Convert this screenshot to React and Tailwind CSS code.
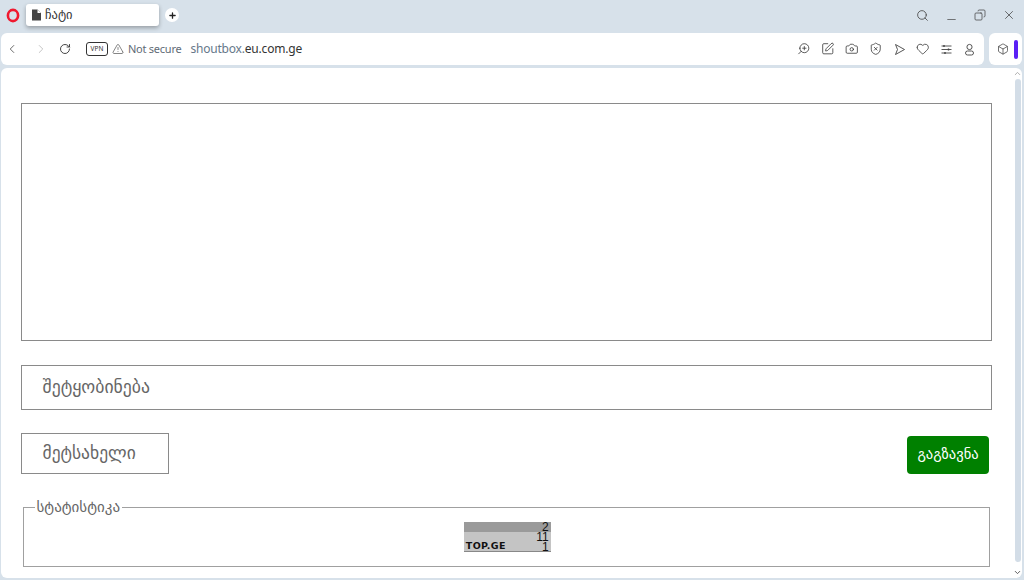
import React from "react";
import {
  ChevronLeft,
  ChevronRight,
  ChevronUp,
  ChevronDown,
  RotateCw,
  TriangleAlert,
  Search,
  Minus,
  X,
  Plus,
  ZoomIn,
  SquarePen,
  Camera,
  ShieldX,
  Heart,
  Box,
  Copy,
} from "lucide-react";

const OperaLogo = () => (
  <svg width="14" height="15" viewBox="0 0 14 15">
    <ellipse cx="7" cy="7.5" rx="5.1" ry="5.6" fill="none" stroke="#f0192f" strokeWidth="2.6" />
  </svg>
);

const PageIcon = () => (
  <svg width="11" height="12" viewBox="0 0 11 12">
    <path d="M1 0.5 H6.5 L10 4 V11.5 H1 Z" fill="#444" />
    <path d="M6.5 0.5 V4 H10" fill="#fff" />
  </svg>
);

const SendIcon = () => (
  <svg width="13" height="13" viewBox="0 0 13 13" fill="none" stroke="#444" strokeWidth="0.9" strokeLinejoin="round">
    <path d="M2.5 1.5 L11.5 6.5 L2.5 11.5 L4.5 6.5 Z" />
  </svg>
);

const SlidersIcon = () => (
  <svg width="13" height="13" viewBox="0 0 13 13" stroke="#444" strokeWidth="0.9">
    <path d="M1.5 3 H11.5 M1.5 6.5 H11.5 M1.5 10 H11.5" />
    <path d="M4 2 V4 M8.5 5.5 V7.5 M5 9 V11" strokeWidth="1.4" />
  </svg>
);

const UserIcon = () => (
  <svg width="13" height="13" viewBox="0 0 13 13" fill="none" stroke="#444" strokeWidth="0.9">
    <circle cx="6.5" cy="4" r="2.6" />
    <rect x="2.5" y="8" width="8" height="4" rx="2" />
  </svg>
);

const lucideProps = { size: 13.5, strokeWidth: 1.4 };

const georgian = "font-['DejaVu_Sans',sans-serif]";

export default function App() {
  return (
    <div className="w-[1024px] h-[580px] overflow-hidden bg-[#d7e1ea] flex flex-col font-['Noto_Sans',sans-serif]">
      {/* tab strip */}
      <div className="h-[33px] shrink-0 flex items-center pl-[6px] pr-[8px] pb-[3px]">
        <OperaLogo />
        <div className="ml-[6px] w-[133px] h-[22px] bg-white rounded-[3px] shadow-[0_2px_4px_rgba(0,0,0,0.3)] flex items-center pl-[5px] gap-[3px]">
          <PageIcon />
          <span className={`text-[12.5px] text-[#333] ${georgian}`}>ჩატი</span>
        </div>
        <div className="ml-[6px] w-[14px] h-[14px] rounded-full bg-white flex items-center justify-center">
          <Plus size={9} strokeWidth={3.5} color="#222" />
        </div>
        <div className="ml-auto flex items-center gap-[16px] text-[#444]">
          <Search size={13} strokeWidth={1.5} />
          <Minus size={13} strokeWidth={1.3} className="translate-y-[4px]" />
          <Copy size={12} strokeWidth={1.5} className="-scale-x-100" />
          <X size={14} strokeWidth={1.3} />
        </div>
      </div>

      {/* address bar */}
      <div className="h-[32px] shrink-0 flex gap-[5px] pl-px pr-[2px]">
        <div className="flex-1 bg-white rounded-[6px] flex items-center pl-[4px] pr-[8px]">
          <ChevronLeft size={14} strokeWidth={1.5} color="#555" />
          <ChevronRight size={14} strokeWidth={1.5} color="#bbb" className="ml-[15px]" />
          <RotateCw size={12} strokeWidth={1.8} color="#333" className="ml-[11px]" />
          <div className="ml-[15px] w-[22px] h-[14px] border border-[#333] rounded-[3px] flex items-center justify-center text-[6.5px] leading-none text-[#333]">
            VPN
          </div>
          <TriangleAlert size={12} strokeWidth={1.3} color="#444" className="ml-[4px]" />
          <span className="ml-[4px] text-[11px] tracking-[-0.25px] text-[#5f6b76]">Not secure</span>
          <span className="ml-[9px] text-[12px] tracking-[-0.2px] text-[#66788a]">
            shoutbox.<span className="text-[#333]">eu.com.ge</span>
          </span>
          <div className="ml-auto flex items-center gap-[10.3px] text-[#333]">
            <ZoomIn {...lucideProps} className="-scale-x-100" />
            <SquarePen {...lucideProps} />
            <Camera {...lucideProps} />
            <ShieldX {...lucideProps} />
            <SendIcon />
            <Heart {...lucideProps} />
            <SlidersIcon />
            <UserIcon />
          </div>
        </div>
        <div className="w-[33px] bg-white rounded-[6px] flex items-center pl-[8px] gap-[5px]">
          <Box size={12} strokeWidth={1.4} color="#333" />
          <div className="w-[4px] h-[19px] rounded-full bg-[#5a20f5]" />
        </div>
      </div>

      {/* page */}
      <div className="mt-[3px] ml-px mr-[2px] h-[510px] bg-white rounded-[6px] flex overflow-hidden">
        <div className="flex-1 pt-[35px] pl-[19.5px] pr-[21px]">
          <div className="h-[238px] border border-[#8a8a8a]" />
          <div className={`mt-[24px] h-[45px] border border-[#8a8a8a] flex items-center pl-[21px] text-[17.7px] text-[#666] ${georgian}`}>
            შეტყობინება
          </div>
          <div className="mt-[23px] flex items-start justify-between">
            <div className={`w-[148px] h-[41px] border border-[#8a8a8a] flex items-center pl-[21px] text-[17.5px] text-[#666] ${georgian}`}>
              მეტსახელი
            </div>
            <button className={`mt-[3px] mr-[3px] w-[82px] h-[38px] bg-[#008000] text-white rounded-[4px] text-[14.5px] ${georgian}`}>
              გაგზავნა
            </button>
          </div>
          <fieldset className="mt-[26px] mx-[2px] h-[67px] border border-[#a0a0a0] pl-[12px] pr-[10px] flex justify-center">
            <legend className={`-ml-[1px] px-[2px] text-[15px] leading-[14px] text-[#666] ${georgian}`}>სტატისტიკა</legend>
            <div className="mt-[8px] mx-auto w-[87px] h-[30px] bg-[#c4c4c4] border-b border-[#888] flex flex-col text-[12px] leading-[10px] text-right text-[#111] pr-[2px] relative font-['Liberation_Sans',sans-serif]">
              <div className="absolute inset-x-0 top-0 h-[10px] bg-[#9a9a9a]" />
              <span className="relative">2</span>
              <span className="relative">11</span>
              <span className="relative">1</span>
              <span className="absolute left-[2px] bottom-[1px] text-[9.5px] leading-[8px] font-bold tracking-[0.4px] text-[#111] font-['DejaVu_Sans',sans-serif]">TOP.GE</span>
            </div>
          </fieldset>
        </div>
        {/* scrollbar */}
        <div className="w-[9px] flex flex-col items-center text-[#555]">
          <ChevronUp size={9} strokeWidth={2.5} color="#aaa" className="mt-[1px]" />
          <div className="w-[6px] flex-1 bg-[#d3dde7] rounded-full mt-[1px] mb-[6px]" />
          <ChevronDown size={9} strokeWidth={2.5} className="mb-[1px]" />
        </div>
      </div>
    </div>
  );
}
